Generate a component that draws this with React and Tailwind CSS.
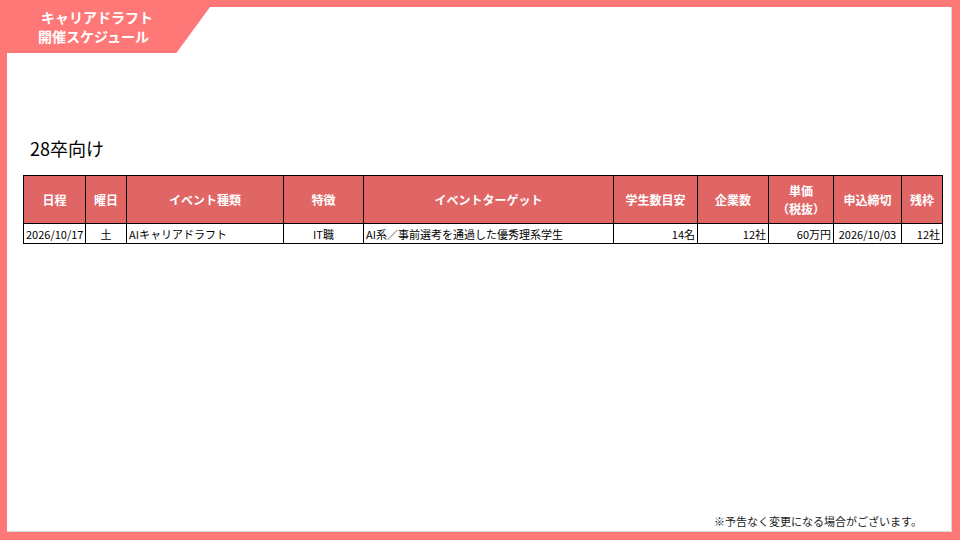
const columns = [
  { label: '日程', width: 62 },
  { label: '曜日', width: 41 },
  { label: 'イベント種類', width: 157 },
  { label: '特徴', width: 80 },
  { label: 'イベントターゲット', width: 250 },
  { label: '学生数目安', width: 84 },
  { label: '企業数', width: 71 },
  { label: ['単価', '（税抜）'], width: 65 },
  { label: '申込締切', width: 68 },
  { label: '残枠', width: 41 },
];

const rows = [
  [
    { text: '2026/10/17', align: 'text-center' },
    { text: '土', align: 'text-center' },
    { text: 'AIキャリアドラフト', align: 'text-left' },
    { text: 'IT職', align: 'text-center' },
    { text: 'AI系／事前選考を通過した優秀理系学生', align: 'text-left' },
    { text: '14名', align: 'text-right' },
    { text: '12社', align: 'text-right' },
    { text: '60万円', align: 'text-right' },
    { text: '2026/10/03', align: 'text-center' },
    { text: '12社', align: 'text-right' },
  ],
];

const font = { fontFamily: '"Noto Sans CJK JP", "Liberation Sans", sans-serif' };

export default function App() {
  return (
    <div
      className="w-[960px] h-[540px] bg-[#ff7878] pt-[7px] pl-[7px] pr-[8px] pb-[8px] relative overflow-hidden"
      style={font}
    >
      {/* title tab */}
      <div className="absolute left-0 top-0 w-[210px] h-[53px] bg-[#ff7878] [clip-path:polygon(0_0,100%_0,100%_13%,84%_100%,0_100%)] flex flex-col items-start pl-[38px] pt-[8px] text-white font-bold text-[14px] leading-[19px] z-10">
        <span className="pl-[3px]">キャリアドラフト</span>
        <span>開催スケジュール</span>
      </div>

      <div className="w-full h-full bg-white flex flex-col shadow-[inset_-1px_-1px_0_#d9d9d9]">
        <div className="pt-[129px] pl-[23px] text-[18px] leading-[24px] text-black">28卒向け</div>

        <table className="ml-[16px] mt-[15px] border-collapse table-fixed w-[919px] text-black">
          <colgroup>
            {columns.map((c, i) => (
              <col key={i} style={{ width: c.width }} />
            ))}
          </colgroup>
          <thead>
            <tr className="h-[48px]">
              {columns.map((c, i) => (
                <th
                  key={i}
                  className="border border-black bg-[#e06666] text-white font-bold text-[12px] leading-[18px] text-center p-0"
                >
                  {Array.isArray(c.label) ? (
                    <div className="flex flex-col items-center">
                      <span>{c.label[0]}</span>
                      <span>{c.label[1]}</span>
                    </div>
                  ) : (
                    c.label
                  )}
                </th>
              ))}
            </tr>
          </thead>
          <tbody>
            {rows.map((row, r) => (
              <tr key={r} className="h-[20px]">
                {row.map((cell, i) => (
                  <td
                    key={i}
                    className={`border border-black text-[11px] leading-[18px] px-[2px] py-0 whitespace-nowrap ${cell.align}`}
                  >
                    {cell.text}
                  </td>
                ))}
              </tr>
            ))}
          </tbody>
        </table>

        <div className="mt-auto pb-[3px] pr-[30px] text-right text-[11px] leading-[16px] text-[#222]">
          ※予告なく変更になる場合がございます。
        </div>
      </div>
    </div>
  );
}
